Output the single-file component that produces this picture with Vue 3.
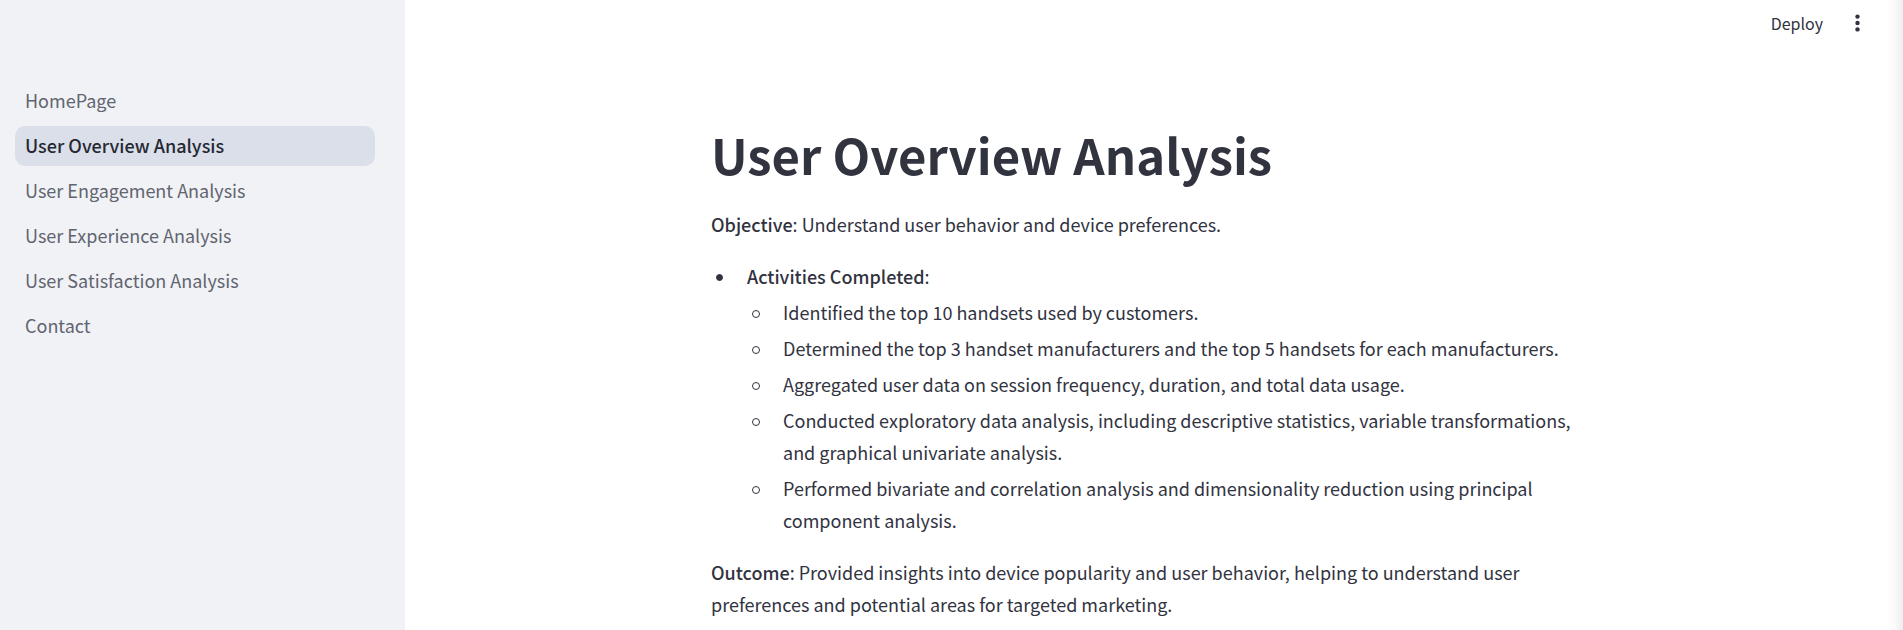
<script setup>
const pages = [
  'HomePage',
  'User Overview Analysis',
  'User Engagement Analysis',
  'User Experience Analysis',
  'User Satisfaction Analysis',
  'Contact',
]
const currentPage = 'User Overview Analysis'

const activities = [
  'Identified the top 10 handsets used by customers.',
  'Determined the top 3 handset manufacturers and the top 5 handsets for each manufacturers.',
  'Aggregated user data on session frequency, duration, and total data usage.',
  'Conducted exploratory data analysis, including descriptive statistics, variable transformations, and graphical univariate analysis.',
  'Performed bivariate and correlation analysis and dimensionality reduction using principal component analysis.',
]
</script>

<template>
  <div class="app">
    <nav class="sidebar" aria-label="Pages">
      <a
        v-for="page in pages"
        :key="page"
        href="#"
        class="page-link"
        :class="{ active: page === currentPage }"
        :aria-current="page === currentPage ? 'page' : undefined"
      >{{ page }}</a>
    </nav>

    <div class="view">
      <header class="toolbar">
        <button type="button" class="deploy">Deploy</button>
        <button type="button" class="menu" aria-label="Main menu">
          <svg viewBox="0 0 20 20" width="20" height="20" fill="currentColor" aria-hidden="true">
            <circle cx="10.5" cy="3.6" r="2.2" />
            <circle cx="10.5" cy="10" r="2.2" />
            <circle cx="10.5" cy="16.4" r="2.2" />
          </svg>
        </button>
      </header>

      <main class="content">
        <h1>User Overview Analysis</h1>
        <p><strong>Objective</strong>: Understand user behavior and device preferences.</p>
        <ul class="outer">
          <li>
            <div>
              <strong>Activities Completed</strong>:
              <ul class="inner">
                <li v-for="activity in activities" :key="activity"><span>{{ activity }}</span></li>
              </ul>
            </div>
          </li>
        </ul>
        <p><strong>Outcome</strong>: Provided insights into device popularity and user behavior, helping to understand user preferences and potential areas for targeted marketing.</p>
      </main>
    </div>
  </div>
</template>

<style>
body {
  margin: 0;
  overflow: hidden;
}
</style>

<style scoped>
.app {
  display: flex;
  min-height: 100vh;
  background: #fff;
  color: #31333f;
  font-family: "Source Sans Pro", "Noto Sans CJK SC", "Noto Sans CJK JP", sans-serif;
  font-size: 18px;
  line-height: 32px;
}

.sidebar {
  box-sizing: border-box;
  flex: 0 0 405px;
  display: flex;
  flex-direction: column;
  gap: 5px;
  padding: 81px 30px 20px 15px;
  background: #f0f2f6;
}

.page-link {
  padding: 3px 10px 5px;
  border-radius: 10px;
  color: #62646f;
  text-decoration: none;
}

.page-link.active {
  background: #dadfea;
  color: #262832;
  font-weight: 500;
}

.view {
  flex: 1;
  min-width: 0;
  background: linear-gradient(to left, #eeeeee, #fafafa 8px, #ffffff 18px);
}

.toolbar {
  display: flex;
  align-items: center;
  justify-content: flex-end;
  gap: 24px;
  height: 46px;
  padding-right: 36px;
}

.toolbar button {
  display: flex;
  padding: 0;
  border: 0;
  background: none;
  color: inherit;
  font: inherit;
}

.toolbar .deploy {
  font-size: 16px;
}

.content {
  box-sizing: border-box;
  max-width: 920px;
  margin: 0 auto;
  padding: 71px 23px 0 17px;
}

h1 {
  margin: 0 0 18px;
  font-size: 49px;
  font-weight: 700;
  line-height: 73px;
}

p {
  margin: 0 0 20px;
}

strong {
  font-weight: 500;
}

ul {
  margin: 0;
  padding: 0;
  list-style: none;
}

.outer {
  margin-bottom: 20px;
}

li {
  display: grid;
  grid-template-columns: 36px minmax(0, 1fr);
}

li::before {
  content: "";
  box-sizing: border-box;
  width: 8px;
  height: 8px;
  margin: 14px 0 0 5px;
  border: 1px solid currentColor;
  border-radius: 50%;
}

.outer > li::before {
  width: 7px;
  height: 7px;
  background: currentColor;
}

.inner > li {
  margin-top: 4px;
}
</style>
